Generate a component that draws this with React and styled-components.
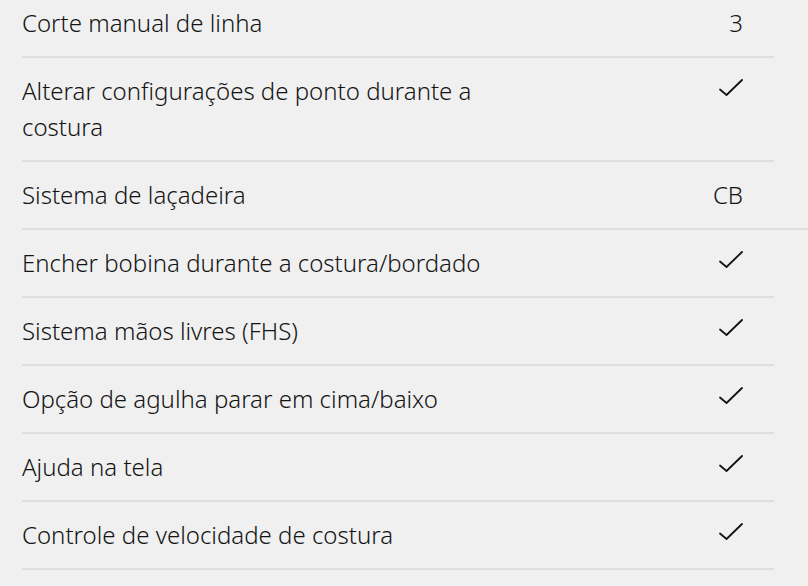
import React from 'react';
import styled, { createGlobalStyle } from 'styled-components';

const GlobalStyle = createGlobalStyle`
  html, body {
    margin: 0;
    padding: 0;
    background: #f0f0f0;
    overflow: hidden;
  }
  body {
    font-family: 'Noto Sans', 'Open Sans', sans-serif;
    color: #141414;
  }
`;

const Page = styled.div`
  width: 808px;
  height: 586px;
  overflow: hidden;
  background: #f0f0f0;
`;

const List = styled.ul`
  list-style: none;
  margin: -10px 0 0 22px;
  padding: 0;
  width: 752px;
`;

const Row = styled.li`
  display: flex;
  justify-content: space-between;
  align-items: flex-start;
  padding: 15px 31px 15px 0;
  border-bottom: 2px solid #dedede;
  margin-right: ${(p) => (p.$wide ? '-34px' : '0')};
  padding-right: ${(p) => (p.$wide ? '65px' : '31px')};
`;

const Label = styled.span`
  flex: 0 0 500px;
  font-size: 24px;
  font-weight: 300;
  line-height: 36px;
`;

const Value = styled.span`
  font-size: 24px;
  font-weight: 300;
  line-height: 36px;
  text-align: right;
`;

const CheckMark = styled.svg`
  display: block;
  margin-top: 6px;
  width: 24px;
  height: 17px;
`;

const Check = () => (
  <CheckMark viewBox="0 0 24 17" fill="none">
    <path
      d="M1 10.5 L7.5 16 L23 1"
      stroke="#141414"
      strokeWidth="1.8"
      strokeLinecap="round"
      strokeLinejoin="round"
    />
  </CheckMark>
);

const rows = [
  { label: 'Corte manual de linha', value: '3' },
  { label: 'Alterar configurações de ponto durante a costura', check: true },
  { label: 'Sistema de laçadeira', value: 'CB', wide: true },
  { label: 'Encher bobina durante a costura/bordado', check: true },
  { label: 'Sistema mãos livres (FHS)', check: true },
  { label: 'Opção de agulha parar em cima/baixo', check: true },
  { label: 'Ajuda na tela', check: true },
  { label: 'Controle de velocidade de costura', check: true },
];

const App = () => {
  return (
    <Page>
      <GlobalStyle />
      <List>
        {rows.map((r) => (
          <Row key={r.label} $wide={r.wide}>
            <Label>{r.label}</Label>
            {r.check ? <Check /> : <Value>{r.value}</Value>}
          </Row>
        ))}
      </List>
    </Page>
  );
};

export default App;
